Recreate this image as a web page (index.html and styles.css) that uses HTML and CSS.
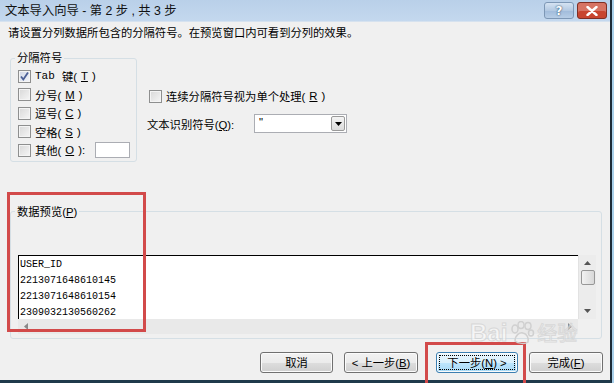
FILE: index.html
```html
<!DOCTYPE html>
<html lang="zh-CN">
	<head>
		<meta charset="UTF-8" />
		<title>文本导入向导</title>
		<link rel="stylesheet" href="styles.css">
	</head>
	<body>
		<div class="frame">
			<div class="window">
				<div class="titlebar">
					<span class="title">文本导入向导 - 第 2 步 , 共 3 步</span>
					<div class="caption-btns">
						<div class="cap help">?</div>
						<div class="cap close-btn">
							<svg width="12" height="10" viewBox="0 0 12 10">
								<path d="M1.5 1 L10.5 9 M10.5 1 L1.5 9" stroke="#ffffff" stroke-width="2.4" stroke-linecap="round" />
							</svg>
						</div>
					</div>
				</div>

				<div class="client">
					<p class="hint">请设置分列数据所包含的分隔符号。在预览窗口内可看到分列的效果。</p>

					<div class="options">
						<fieldset class="group sep-group">
							<legend>分隔符号</legend>
							<label class="check"><span class="box on"><svg width="11" height="11" viewBox="0 0 11 11"><path d="M2 5.5 L4.3 8.5 L9 1.5" fill="none" stroke="#4b5f96" stroke-width="1.8" /></svg></span><span class="mono">Tab</span>&nbsp;键(<u>T</u>)</label>
							<label class="check"><span class="box"></span>分号(<u>M</u>)</label>
							<label class="check"><span class="box"></span>逗号(<u>C</u>)</label>
							<label class="check"><span class="box"></span>空格(<u>S</u>)</label>
							<label class="check"><span class="box"></span>其他(<u>O</u>):<span class="other-input"></span></label>
						</fieldset>

						<div class="side">
							<label class="check"><span class="box"></span>连续分隔符号视为单个处理(<u>R</u>)</label>
							<div class="qualifier">
								<span class="q-label">文本识别符号(<u>Q</u>):</span>
								<div class="select">
									<span class="select-value">"</span>
									<span class="drop">
										<svg width="7" height="4" viewBox="0 0 7 4"><path d="M0 0 H7 L3.5 4 Z" fill="#000" /></svg>
									</span>
								</div>
							</div>
						</div>
					</div>

					<fieldset class="group preview">
						<legend>数据预览(<u>P</u>)</legend>
						<div class="grid">
							<div class="rows">
								<div>USER_ID</div>
								<div>2213071648610145</div>
								<div>2213071648610154</div>
								<div>2309032130560262</div>
							</div>
							<div class="vscroll">
								<svg width="7" height="4" viewBox="0 0 7 4"><path d="M0 4 H7 L3.5 0 Z" fill="#555" /></svg>
								<span class="thumb"></span>
								<span class="vspace"></span>
								<svg width="7" height="4" viewBox="0 0 7 4"><path d="M0 0 H7 L3.5 4 Z" fill="#555" /></svg>
							</div>
						</div>
						<div class="hscroll">
							<svg width="4" height="7" viewBox="0 0 4 7"><path d="M4 0 V7 L0 3.5 Z" fill="#8a8a8a" /></svg>
							<svg width="4" height="7" viewBox="0 0 4 7"><path d="M0 0 V7 L4 3.5 Z" fill="#8a8a8a" /></svg>
						</div>
					</fieldset>

					<div class="buttons">
						<button class="btn cancel">取消</button>
						<button class="btn prev">&lt; 上一步(<u>B</u>)</button>
						<button class="btn next"><span class="focus">下一步(<u>N</u>) &gt;</span></button>
						<button class="btn finish">完成(<u>F</u>)</button>
					</div>
				</div>
			</div>

			<!-- annotations drawn over the dialog -->
			<div class="mark mark-preview"></div>
			<div class="mark mark-next"></div>
			<div class="watermark">
				<span>Bai</span>
				<svg width="26" height="24" viewBox="0 0 26 24">
					<g fill="none" stroke="#d0d0d0" stroke-width="1.5">
						<ellipse cx="6" cy="8" rx="3" ry="4" />
						<ellipse cx="12" cy="4" rx="3" ry="3.5" />
						<ellipse cx="19" cy="5" rx="3" ry="3.5" />
						<ellipse cx="22" cy="12" rx="2.5" ry="3" />
						<path d="M6 20 C6 14 11 11 14 12 C18 13 20 17 19 21 C17 23 9 23 6 20 Z" />
					</g>
				</svg>
				<span class="wm-cn">经验</span>
			</div>
		</div>
	</body>
</html>
```

FILE: styles.css
```css
* {
	box-sizing: border-box;
}

body {
	margin: 0;
	font-family: "Liberation Sans", "Noto Sans CJK SC", sans-serif;
	font-size: 11.3px;
	color: #000;
	background: #f0f0f0;
	overflow: hidden;
}

u {
	text-decoration: underline;
}

.frame {
	position: relative;
	width: 614px;
	height: 383px;
	background: #a9d0ea;
	padding-right: 2px;
	overflow: hidden;
}

.window {
	height: 100%;
	display: flex;
	flex-direction: column;
	border-right: 2px solid #1c2b38;
	border-bottom: 3px solid #1f3a4b;
	background: #f0f0f0;
}

/* Title bar */
.titlebar {
	height: 22px;
	flex-shrink: 0;
	display: flex;
	justify-content: space-between;
	align-items: flex-start;
	padding: 2px 3px 0 5px;
	background: linear-gradient(#b9d0e9, #c4d8ee);
	border-bottom: 1px solid #d6e2ef;
}

.title {
	font-size: 12.3px;
	line-height: 18px;
	color: #111;
}

.caption-btns {
	display: flex;
	gap: 3px;
}

.cap {
	width: 30px;
	height: 17px;
	flex-shrink: 0;
	border-radius: 3px;
	display: flex;
	align-items: center;
	justify-content: center;
}

.help {
	border: 1px solid #7d97b5;
	background: linear-gradient(#d5e3f2, #b3c9e2 50%, #a0bbdb 51%, #b7cde6);
	color: #fff;
	font-family: "DejaVu Sans", sans-serif;
	font-weight: bold;
	font-size: 12px;
	text-shadow: 0 0 2px #355777, 0 0 1px #355777;
}

.close-btn {
	border: 1px solid #7e2f25;
	background: #c8452f;
	box-shadow: inset 0 8px 0 rgba(255, 255, 255, 0.25);
}

/* Client area */
.client {
	flex: 1;
	padding: 3px 7px 0 8px;
}

.hint {
	margin: 0;
	line-height: 16px;
}

.options {
	display: flex;
	margin-top: 10px;
}

.group {
	margin: 0 0 0 2px;
	border: 1px solid #d5dfe5;
	border-radius: 3px;
	min-width: 0;
}

.group legend {
	padding: 0 2px;
	margin-left: -3px;
	line-height: 14px;
}

.sep-group {
	width: 127px;
	padding: 2px 0 1px 7px;
}

.check {
	display: flex;
	align-items: center;
	height: 18.5px;
	gap: 4px;
	white-space: nowrap;
}

.mono {
	font-family: "Liberation Mono", monospace;
	font-size: 11px;
}

.box {
	width: 13px;
	height: 13px;
	flex-shrink: 0;
	border: 1px solid #8e8f8f;
	background: linear-gradient(135deg, #d8d8d8, #f6f6f6);
	box-shadow: inset 0 0 0 1px #f4f4f4;
	display: flex;
	align-items: center;
	justify-content: center;
}

.box.on {
	background: linear-gradient(135deg, #cfd6e6, #f4f6fa);
}

.other-input {
	width: 35px;
	height: 16px;
	margin-left: auto;
	margin-right: 6px;
	background: #fff;
	border: 1px solid #abadb3;
}

.side {
	margin-left: 10px;
	padding-top: 36px;
}

.side .check {
	height: 18px;
	margin-left: 2px;
}

.qualifier {
	display: flex;
	align-items: center;
	margin-top: 9px;
	height: 19px;
}

.q-label {
	width: 107px;
}

.select {
	width: 93px;
	height: 19px;
	display: flex;
	background: #fff;
	border: 1px solid #abadb3;
	padding: 1px;
}

.select-value {
	flex: 1;
	padding-left: 3px;
	line-height: 12px;
}

.drop {
	width: 14px;
	display: flex;
	align-items: center;
	justify-content: center;
	border: 1px solid #9a9a9a;
	border-radius: 2px;
	background: linear-gradient(#f4f4f4, #dcdcdc);
}

/* Data preview */
.preview {
	margin-top: 43px;
	width: 592px;
	padding: 36px 5px 4px 7px;
}

.grid {
	display: flex;
	height: 64px;
}

.rows {
	width: 560px;
	background: #fff;
	border-top: 1px solid #000;
	border-left: 1px solid #000;
	overflow: hidden;
	font-family: "Liberation Mono", monospace;
	font-size: 10px;
	line-height: 16.3px;
	padding: 1px 0 0 1px;
}

.vscroll {
	width: 18px;
	display: flex;
	flex-direction: column;
	align-items: center;
	padding: 6px 0 6px;
	background: #ececec;
	border-left: 1px solid #e2e2e2;
}

.thumb {
	width: 14px;
	height: 15px;
	margin-top: 5px;
	border: 1px solid #979797;
	border-radius: 2px;
	background: linear-gradient(90deg, #f2f2f2, #d8d8d8);
}

.vspace {
	flex: 1;
}

.hscroll {
	width: 560px;
	height: 15px;
	display: flex;
	justify-content: space-between;
	align-items: center;
	padding: 0 6px;
	background: #e9e9e9;
}

/* Buttons */
.buttons {
	display: flex;
	justify-content: flex-end;
	gap: 11px;
	margin-top: 13px;
}

.btn {
	height: 21px;
	width: 74px;
	padding: 0;
	font-family: inherit;
	font-size: 11.3px;
	color: #000;
	border: 1px solid #707070;
	border-radius: 3px;
	background: linear-gradient(#f2f2f2, #ebebeb 50%, #dddddd 51%, #cfcfcf);
	box-shadow: inset 0 0 0 1px #fbfbfb;
}

.cancel {
	width: 73px;
}

.next {
	width: 82px;
	margin-left: 7px;
	border-color: #3c7fb1;
	background: linear-gradient(#eaf6fd, #d9f0fc 50%, #bee6fd 51%, #a7d9f5);
	padding: 2px;
}

.focus {
	display: block;
	height: 100%;
	line-height: 14px;
	border: 1px dotted #000;
}

/* Annotations */
.mark {
	position: absolute;
	border: 3px solid #d24a4a;
}

.mark-preview {
	left: 7px;
	top: 192px;
	width: 139px;
	height: 140px;
}

.mark-next {
	left: 425px;
	top: 342px;
	width: 101px;
	height: 60px;
}

.watermark {
	position: absolute;
	left: 470px;
	top: 318px;
	display: flex;
	align-items: center;
	gap: 2px;
	font-family: "Liberation Sans", sans-serif;
	font-weight: bold;
	font-size: 24px;
	color: rgba(255, 255, 255, 0.5);
	-webkit-text-stroke: 1px rgba(200, 200, 200, 0.6);
	pointer-events: none;
}

.watermark .wm-cn {
	font-family: "Noto Sans CJK SC", sans-serif;
	font-size: 20px;
	font-weight: normal;
}
```
